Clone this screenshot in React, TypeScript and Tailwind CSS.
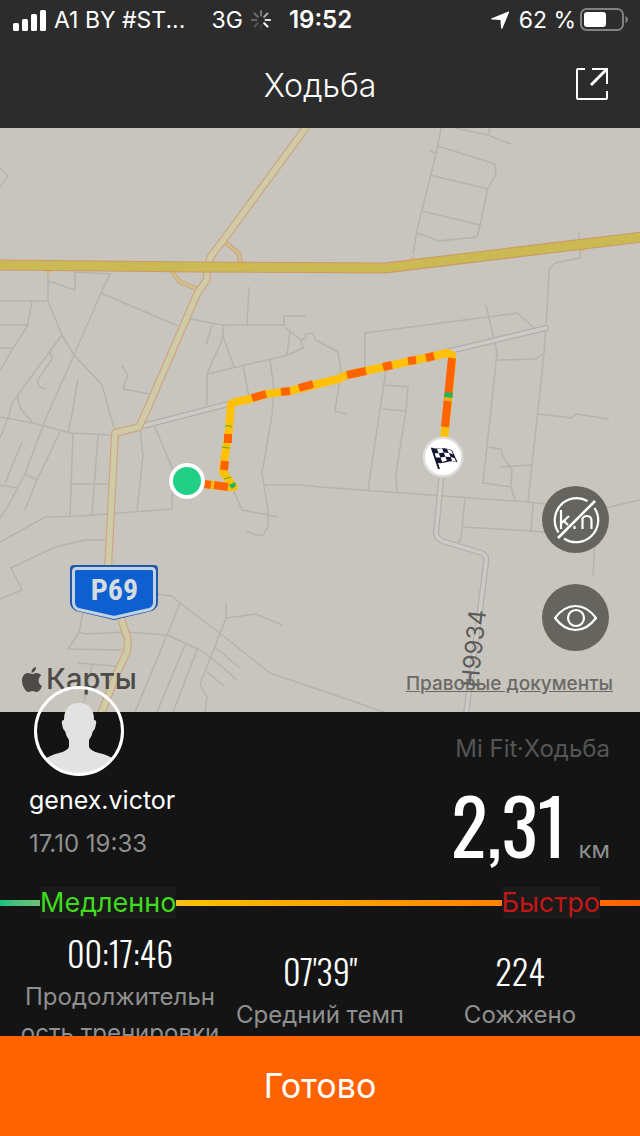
const STREETS = [
  "0,168 8,176 0,187",
  "0,301 48,301",
  "48,272 48,301 62,335 74,355 102,385 111,418 115,430",
  "48,281 75,290 75,272 110,274 101,293 74,355 46,418 25,474 7,508 0,518",
  "101,293 178,326",
  "32,302 27,327 13,348 0,371",
  "0,325 29,325",
  "0,348 13,348",
  "62,335 50,351 17,396 12,403 8,418 0,438",
  "50,351 52,359 37,381 40,387 45,389",
  "17,396 21,409 33,423",
  "78,379 72,414 68,433",
  "122,366 128,375 123,389 149,394",
  "190,319 222,325 284,325 284,316 306,316",
  "249,287 247,324",
  "212,325 206,345",
  "224,325 222,340 207,374 207,405",
  "222,333 234,367",
  "207,374 288,355 303,348 301,340 285,327",
  "290,331 287,355",
  "301,340 306,338 305,334 312,333 316,340 338,352 341,372 335,411 346,414",
  "243,365 250,403",
  "270,360 274,390 272,415 262,473 268,510 268,527 263,535 256,535 246,531",
  "441,128 437,150 417,230 413,254",
  "455,128 488,135 511,144",
  "488,135 490,128",
  "438,146 495,164 496,174 488,188 480,225 477,237 439,241 417,233",
  "430,151 435,153",
  "430,175 488,189",
  "422,211 480,225",
  "365,370 365,333 517,313 534,328",
  "486,305 497,352 491,410 483,483 511,487 515,500",
  "511,487 512,470 503,457 501,449 489,447",
  "501,467 532,465",
  "498,360 536,359 544,353",
  "579,232 579,240",
  "580,248 580,258 555,263 549,270 546,328 544,353 538,410 528,502",
  "538,414 572,418 576,414 609,419",
  "386,370 380,410 368,490",
  "385,385 408,387 406,411 396,473 397,492",
  "382,409 406,411",
  "265,485 300,485 320,487 527,502 575,507 605,508 640,500",
  "465,498 461,538 458,543",
  "463,527 531,531 595,536 593,576",
  "533,504 531,531",
  "0,417 33,423 70,433 110,435",
  "60,432 37,480 25,510",
  "22,442 5,483",
  "0,485 17,488",
  "25,474 37,480",
  "73,433 70,516",
  "98,436 92,515",
  "71,484 108,484",
  "0,542 45,517 80,516 172,509 173,470 155,427",
  "140,430 143,455 137,511",
  "0,599 22,590 11,568 55,547 85,540 105,540",
  "232,487 242,510 278,517",
  "158,594 172,596 180,603 222,635 270,673 320,690 384,712",
  "180,603 167,635 135,712",
  "83,612 79,632 68,649 122,650",
  "79,632 85,634 125,632 167,635 200,650 212,658 237,680",
  "226,603 226,618 200,684 207,697 205,712",
  "226,618 256,614 282,625",
  "185,645 157,712",
  "197,650 173,712",
  "215,647 240,668",
  "207,672 224,686",
  "78,663 115,666",
  "92,665 82,712",
];

const LOCAL_ROADS = [
  "139,427 236,402",
  "446,352 546,328",
  "442,470 436,533 437,537 442,541 482,553 486,557 486,563 480,610 466,714",
];

const RAMPS = ["223,240 239,254 241,264", "171,270 180,282 197,289"];

const SECONDARY =
  "310,122 222,242 211,256 207,268 207,279 197,294 150,403 139,427 115,433 108,570 119,612 128,640 127,652 117,673 101,714";

const TRUNK = "-2,265 200,267 385,268 642,237";

const FAST_PARTS = [
  "252,398 266,394",
  "281,392 290,391",
  "299,388 313,384",
  "347,375 366,371",
  "383,367 392,365",
  "408,361 416,360",
  "426,358 434,356",
  "452,358 445,427",
  "228,434 228,443",
  "225,461 224,470",
  "204,484 211,485",
  "214,485 228,487",
];

function RouteMap() {
  return (
    <svg
      viewBox="0 128 640 584"
      preserveAspectRatio="xMidYMid slice"
      className="block h-full w-full"
      role="img"
      aria-label="Маршрут"
    >
      <rect y="128" width="640" height="584" fill="#c8c5bf" />
      <g fill="none" stroke="#b5b3ae" strokeWidth="1.5" strokeLinejoin="round">
        {STREETS.map((p) => (
          <polyline key={p} points={p} />
        ))}
      </g>
      <g fill="none" strokeLinejoin="round" strokeLinecap="round">
        {LOCAL_ROADS.map((p) => (
          <polyline key={p} points={p} stroke="#b1afaa" strokeWidth="6" />
        ))}
        {LOCAL_ROADS.map((p) => (
          <polyline key={p} points={p} stroke="#cbcac7" strokeWidth="3.6" />
        ))}
        {RAMPS.map((p) => (
          <polyline key={p} points={p} stroke="#cda178" strokeWidth="4.5" />
        ))}
        {RAMPS.map((p) => (
          <polyline key={p} points={p} stroke="#cfc08c" strokeWidth="2.8" />
        ))}
        <path d="M45 271h7l-3.500 4zM409 260l3-4 3 3zM578 249h8l-4 4z" fill="#d3b580" />
        <polyline points={SECONDARY} stroke="#cfa582" strokeWidth="8" />
        <polyline points={SECONDARY} stroke="#cfcba7" strokeWidth="5.6" />
        <polyline points={TRUNK} stroke="#cc9a68" strokeWidth="11" />
        <polyline points={TRUNK} stroke="#cbb954" strokeWidth="8.800" />
      </g>

      <g fill="none" strokeWidth="8">
        <polyline
          points="205,484 229,487 234,487 223,472 224,462 229,430 231,404 235,402 250,399 266,394 290,391 338,379 347,375 434,356 447,353 452,355 452,362 444,440"
          stroke="#ffc107"
          strokeLinejoin="round"
        />
        <g stroke="#ff6400">
          {FAST_PARTS.map((p) => (
            <polyline key={p} points={p} />
          ))}
        </g>
        <path d="M448.800 392.500 448.400 397.500" stroke="#1fb55b" />
        <path d="M448.400 397.500 448 401" stroke="#e3b51c" />
      </g>
      <g fill="none" stroke="#5eae2b" strokeWidth="1.200">
        <path d="M225 426q3-1 7 1M222 447q4 1 8 1M224 479l7-2" />
      </g>
      <path d="M229 485l6-3 1 4-4 3z" fill="#1fb55b" />

      <circle cx="187" cy="481" r="18.500" fill="#000" opacity=".08" />
      <circle cx="187" cy="481" r="18" fill="#fff" />
      <circle cx="187" cy="481" r="14" fill="#21cf85" />

      <circle cx="443" cy="457" r="20.500" fill="#dedddb" />
      <circle cx="443" cy="457" r="18" fill="#fff" />
      <g transform="translate(431 447)">
        <path d="M1 1 8 22" stroke="#14142f" strokeWidth="2" fill="none" />
        <path d="M0 0.500C6 3 12-1 21 3.200Q22.500 6 26.500 15.200C18 12 13 18 5.500 15.500Z" fill="#14142f" />
        <path
          d="M5.800 1.800 11 1.200 12.800 5.400 7.700 6.200ZM16 1.900 20.300 3.400 22 7.200 17.800 5.900ZM3.700 6.200 7.700 6.200 9.500 10.600 5 10.400ZM12.800 5.400 17.800 5.900 19.600 10 14.300 9.800ZM9.500 10.600 14.300 9.800 16 13.600 11.200 14.900ZM19.600 10 23.500 11 25 14.400 21 13.700Z"
          fill="#fff"
        />
      </g>

      <path
        d="M74 565h80q4 0 4 4v33q0 6-6 9-17 4-38 9-21-5-38-9-6-3-6-9v-33q0-4 4-4z"
        fill="#2057a8"
      />
      <path
        d="M76.500 568.500h75q3 0 3 3v31q0 5-5 7-16 3.500-35.500 8-19.500-4.500-35.500-8-5-2-5-7v-31q0-3 3-3z"
        fill="#0e5fcf"
        stroke="#c3d2e0"
        strokeWidth="3"
      />
      <text
        x="114.500"
        y="600"
        textAnchor="middle"
        fontSize="30"
        className="fill-[#d5dbe0] font-['Roboto_Condensed','Liberation_Sans',sans-serif] font-bold"
      >
        P69
      </text>
      <text
        x="478"
        y="688"
        transform="rotate(-84 478 688)"
        fontSize="24"
        className="fill-[#5c5b59] font-['Inter',sans-serif]"
      >
        Н9934
      </text>
    </svg>
  );
}

function SignalIcon() {
  return (
    <svg viewBox="0 0 33 21" className="h-[21px] w-[33px] shrink-0" fill="#fff" aria-hidden="true">
      <rect y="13" width="6" height="8" rx="1.500" />
      <rect x="9" y="9" width="6" height="12" rx="1.500" />
      <rect x="18" y="4" width="6" height="17" rx="1.500" />
      <rect x="27" width="6" height="21" rx="1.500" />
    </svg>
  );
}

function SpinnerIcon() {
  const shades = ["#777", "#aaa", "#ddd", "#fff", "#3a3a3a", "#555", "#666", "#707070"];
  return (
    <svg viewBox="-10 -10 20 20" className="h-5 w-5 shrink-0" aria-hidden="true">
      {shades.map((shade, i) => (
        <path key={shade} d="M0-4.500V-9.200" stroke={shade} strokeWidth="2" strokeLinecap="round" transform={`rotate(${i * 45})`} />
      ))}
    </svg>
  );
}

function BatteryIcon() {
  return (
    <svg viewBox="0 0 48 24" className="h-6 w-12 shrink-0" fill="none" aria-hidden="true">
      <rect x="1" y="1" width="42" height="21" rx="5.500" stroke="#818181" strokeWidth="2" />
      <rect x="4" y="4" width="22" height="15" rx="3" fill="#fff" />
      <path d="M45.500 8v7q2.500-1 2.500-3.500t-2.500-3.500z" fill="#818181" />
    </svg>
  );
}

function Metric({ value, label }: { value: string; label: string }) {
  return (
    <div className="flex flex-1 flex-col items-center justify-center text-center">
      <dd className="order-1 font-['Oswald','Roboto_Condensed',sans-serif] text-[34px] leading-[44px] font-light text-white">
        {value}
      </dd>
      <dt className="order-2 mt-1 w-full text-[24px] leading-9 break-all text-[#8f8f8f]">{label}</dt>
    </div>
  );
}

export default function App() {
  return (
    <div className="flex h-screen flex-col bg-[#141414] font-['Inter',sans-serif] text-white">
      <header className="shrink-0 bg-[#2c2c2c]">
        <div className="grid h-10 grid-cols-[1fr_auto_1fr] items-center pr-3 pl-[13px] text-[23px] leading-8 whitespace-nowrap">
          <div className="flex items-center">
            <SignalIcon />
            <span className="ml-2">A1 BY #ST...</span>
            <span className="mr-2 ml-auto">3G</span>
            <SpinnerIcon />
          </div>
          <time className="mx-[18px] text-[24px] font-semibold">19:52</time>
          <div className="flex items-center justify-end">
            <svg viewBox="0 0 18 18" className="mr-[10px] h-[18px] w-[18px] shrink-0" fill="#fff" aria-hidden="true">
              <path d="M17.500.5Q18.500 0 18 1.500L11.500 17.200Q10.500 18.500 10 17L9.500 9 .8 8.500Q-.5 8 .8 7.200Z" />
            </svg>
            <span className="mr-1">62 %</span>
            <BatteryIcon />
          </div>
        </div>
        <div className="grid h-[88px] grid-cols-[1fr_auto_1fr] items-center px-8">
          <h1 className="col-start-2 pt-1 text-[32px] leading-10 font-light">Ходьба</h1>
          <button type="button" aria-label="Поделиться" className="justify-self-end">
            <svg viewBox="0 0 32 32" className="h-8 w-8" fill="none" stroke="#fff" strokeWidth="2" aria-hidden="true">
              <path d="M9 1H2Q1 1 1 2V30Q1 31 2 31H30Q31 31 31 30V23M16 1H31V16" />
              <path d="M31 1 15 17" strokeWidth="3" />
            </svg>
          </button>
        </div>
      </header>

      <main className="min-h-0 flex-1 overflow-y-auto [scrollbar-width:none]">
        <section className="relative aspect-[640/584] w-full">
          <RouteMap />
          <div className="absolute bottom-[15px] left-[22px] flex items-center gap-1 text-[#4d4b48]">
            <svg viewBox="0 0 20 25" className="h-[25px] w-5" fill="currentColor" aria-hidden="true">
              <path d="M14 0q.3 2.300-1.200 4.100-1.400 1.700-3.300 1.600-.2-2.200 1.200-3.900Q12 .3 14 0zM16.600 13.200q0-3.200 2.700-4.900-1.500-2.200-4.500-2.400c-1.900-.1-3.400 1.100-4.400 1.100S7.800 5.900 6.300 5.900C2.600 5.900 0 8.900 0 13.600 0 19 3.600 25 6.500 25c1.400 0 2.200-1 4-1s2.400 1 4 1q3.500-.3 5.500-6-3.400-1.600-3.400-5.800z" />
            </svg>
            <span className="text-[29px] leading-9 font-medium">Карты</span>
          </div>
          <a
            href="#legal"
            className="absolute right-[27px] bottom-4 text-[19px] leading-6 font-medium text-[#6b6966] underline"
          >
            Правовые документы
          </a>
          <div className="absolute right-[31px] bottom-[61px] flex flex-col gap-[31px]">
            <button type="button" aria-label="Скрыть километры" className="h-[67px] w-[67px] rounded-full bg-[#66645f]">
              <svg viewBox="0 0 67 67" className="h-full w-full" fill="none" stroke="#fff" strokeWidth="2.2" aria-hidden="true">
                <path d="M45.500 15A22 22 0 0 0 16.500 46.500M22 52.500A22 22 0 0 0 52.500 22" />
                <path d="M53 15 16 52" strokeWidth="2.500" />
                <path d="M19 24V43M27 30 19.500 37M22.500 35.500 26 39M32.500 40V43M40.500 43V33M40 34Q41 30 45 30 49.500 30 49.500 35V43" />
              </svg>
            </button>
            <button type="button" aria-label="Вид карты" className="h-[67px] w-[67px] rounded-full bg-[#66645f]">
              <svg viewBox="0 0 67 67" className="h-full w-full" fill="none" stroke="#fff" strokeWidth="2.2" strokeLinejoin="round" aria-hidden="true">
                <path d="M13 34Q22 22 33.500 22T54 34Q45 46 33.500 46T13 34Z" />
                <circle cx="34" cy="34" r="8" />
              </svg>
            </button>
          </div>
        </section>

        <section className="relative">
          <div className="flex justify-between pr-[30px] pl-[29px]">
            <div>
              <svg viewBox="0 0 90 90" className="-mt-[26px] ml-[5px] h-[90px] w-[90px]" aria-hidden="true">
                <defs>
                  <clipPath id="avatar">
                    <circle cx="45" cy="45" r="43" />
                  </clipPath>
                </defs>
                <path clipPath="url(#avatar)" fill="#141414" d="M0 26H90V90H0Z" />
                <path
                  clipPath="url(#avatar)"
                  fill="#e2e2e2"
                  d="M45 17c10 0 15 6 15 17q3 0 2 4-1 6-3 7-1 5-4 9v7q2 4 10 6 10 2 17 8v16H8V75q8-6 17-8 8-2 10-6v-7q-3-4-4-9-2-1-3-7-1-4 2-4c0-11 5-17 15-17z"
                />
                <circle cx="45" cy="45" r="43.500" fill="none" stroke="#fff" strokeWidth="3" />
              </svg>
              <p className="mt-2 text-[25px] leading-8">genex.victor</p>
              <p className="mt-3 text-[24px] leading-8 text-[#8f8f8f]">17.10 19:33</p>
            </div>
            <div className="pt-[21px] text-right">
              <p className="text-[24px] leading-8 text-[#555]">Mi Fit·Ходьба</p>
              <p className="mt-3 flex items-baseline justify-end gap-3">
                <span className="font-['Oswald','Roboto_Condensed',sans-serif] text-[76px] leading-[94px]">2,31</span>
                <span className="text-[24px] text-[#8f8f8f]">км</span>
              </p>
            </div>
          </div>

          <div className="mt-4 flex justify-between bg-linear-to-r from-[#12c080] via-[#ffbe00] via-30% to-[#ff6000] bg-[length:100%_6px] bg-center bg-no-repeat px-10 text-[27px] leading-8">
            <span className="bg-[#1a1a1a] text-[#3fdc1c]">Медленно</span>
            <span className="bg-[#1a1a1a] text-[#c41616]">Быстро</span>
          </div>

          <dl className="mt-3 flex px-5">
            <Metric value="00:17:46" label="Продолжительность тренировки" />
            <Metric value={"07'39\""} label="Средний темп" />
            <Metric value="224" label="Сожжено" />
          </dl>
        </section>
      </main>

      <footer className="shrink-0">
        <button type="button" className="h-[100px] w-full bg-[#ff6200] text-[34px] leading-10">
          Готово
        </button>
      </footer>
    </div>
  );
}
